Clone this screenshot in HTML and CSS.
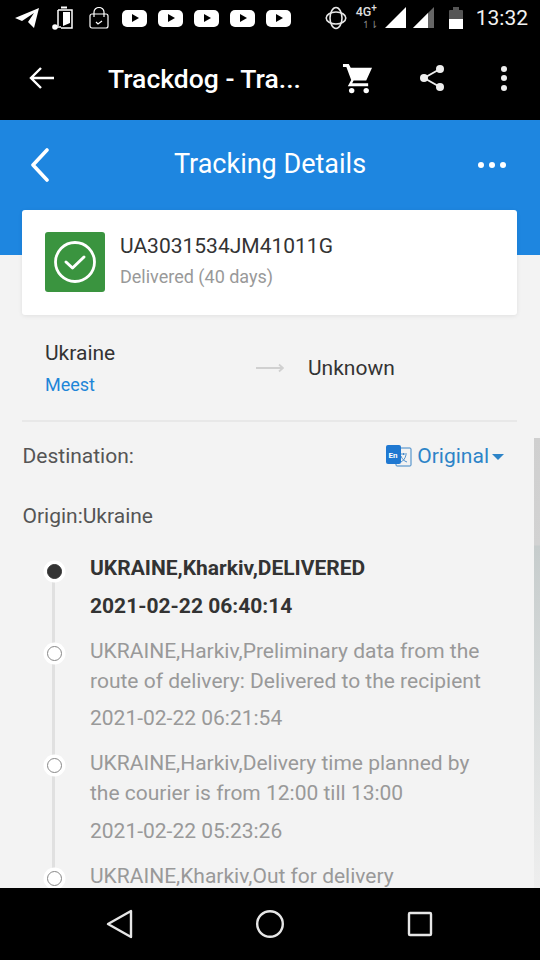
FILE: index.html
```html
<!DOCTYPE html>
<html lang="en">
<head>
    <meta charset="UTF-8">
    <meta name="viewport" content="width=device-width, initial-scale=1.0">
    <title>Tracking Details</title>
    <link rel="stylesheet" href="styles.css">
</head>
<body>
    <div class="status-bar">
        <div class="status-left">
            <svg width="24" height="22" viewBox="0 0 24 22"><path d="M0 11 24 1 19 21 13 15 19 6 7 14Z" fill="#fff"/></svg>
            <svg width="22" height="24" viewBox="0 0 22 24" fill="none" stroke="#fff" stroke-width="1.500"><path d="M6 4h14v18H9"/><path d="M9 1.500h6" stroke-width="2"/><path d="M11 6h7v11l-7 3z" fill="#fff" stroke="none"/><path d="M6 4v16"/><circle cx="3" cy="21" r="2.800" fill="#fff" stroke="none"/><path d="M3 21h6"/></svg>
            <svg width="20" height="22" viewBox="0 0 20 22" fill="none" stroke="#fff" stroke-width="1.200"><rect x="1" y="7" width="18" height="14" rx="2"/><path d="M5 10V5a5 4.500 0 0 1 10 0v5"/><path d="M7 15l2 2 4-3"/></svg>
            <span class="yt"></span><span class="yt"></span><span class="yt"></span><span class="yt"></span><span class="yt"></span>
        </div>
        <div class="status-right">
            <svg class="sync" width="22" height="24" viewBox="0 0 22 24" fill="none" stroke="#e8e8e8" stroke-width="1.600"><ellipse cx="11" cy="12" rx="6" ry="10.500"/><ellipse cx="11" cy="12" rx="9.800" ry="6"/></svg>
            <div class="net"><span>4G<sup>+</sup></span><small>↿⇂</small></div>
            <svg width="22" height="22" viewBox="0 0 22 22"><path d="M0 21 21 0V21Z" fill="#fff"/></svg>
            <svg width="22" height="22" viewBox="0 0 22 22"><path d="M0 21 21 0V21Z" fill="#666"/><path d="M0 21 15 6V21Z" fill="#fff"/></svg>
            <div class="battery"><i></i></div>
            <span class="clock">13:32</span>
        </div>
    </div>

    <div class="app-bar">
        <svg class="app-back" width="26" height="26" viewBox="0 0 26 26" fill="none" stroke="#fff" stroke-width="2.400"><path d="M25 13H2M12 3 2 13l10 10"/></svg>
        <span class="app-title">Trackdog - Tra...</span>
        <svg class="cart" width="31" height="31" viewBox="0 0 32 32" fill="#fff"><path d="M1 1h6l2 4h22l-6 13H12l-1.500 3H27v3H6l3.500-6.500L4.500 4H1z"/><circle cx="10" cy="28.500" r="2.800"/><circle cx="25" cy="28.500" r="2.800"/></svg>
        <svg class="share" width="26" height="28" viewBox="0 0 26 28" fill="#eee"><circle cx="21" cy="5" r="4"/><circle cx="5" cy="14" r="4"/><circle cx="21" cy="23" r="4"/><path d="M5 14 21 5M5 14l16 9" stroke="#eee" stroke-width="2"/></svg>
        <div class="more"><i></i><i></i><i></i></div>
    </div>

    <div class="screen">
        <div class="blue-head">
            <svg width="20" height="34" viewBox="0 0 20 34" fill="none" stroke="#fff" stroke-width="3.600" stroke-linecap="round" stroke-linejoin="round"><path d="M17 2 3 17l14 15"/></svg>
            <h1>Tracking Details</h1>
            <div class="head-dots"><i></i><i></i><i></i></div>
        </div>

        <div class="card">
            <div class="status-icon">
                <svg width="44" height="44" viewBox="0 0 44 44" fill="none" stroke="#fff" stroke-width="2.800"><circle cx="22" cy="22" r="19.500"/><path d="M13 22l6.500 6L31 17" stroke-width="3" stroke-linecap="round" stroke-linejoin="round"/></svg>
            </div>
            <div>
                <div class="track-no">UA3031534JM41011G</div>
                <div class="track-state">Delivered (40 days)</div>
            </div>
        </div>

        <div class="route">
            <div class="route-from">
                <div>Ukraine</div>
                <div class="carrier">Meest</div>
            </div>
            <svg width="28" height="10" viewBox="0 0 28 10" fill="none" stroke="#d0d0d0" stroke-width="1.800"><path d="M0 5h27M23 1.500 27 5l-4 3.500"/></svg>
            <div class="route-to">Unknown</div>
        </div>

        <div class="dest-row">
            <span>Destination:</span>
            <div class="translate">
                <svg width="26" height="22" viewBox="0 0 26 22"><rect x="10" y="3" width="15" height="18" rx="1" fill="#f2f2f2" stroke="#3d85c6" stroke-width="1"/><path d="M14 9h7M17.500 8v2M20 10c-1 4-3 6-5 7M15 11c1 3 3 5 6 6" fill="none" stroke="#3d85c6" stroke-width=".9"/><rect x="0" y="0" width="15" height="19" rx="2" fill="#1f78d1"/><text x="2.500" y="12.500" class="en">En</text></svg>
                <span>Original</span>
                <i class="caret"></i>
            </div>
        </div>

        <div class="origin">Origin:Ukraine</div>

        <div class="timeline">
            <div class="event current">
                <div class="event-text">UKRAINE,Kharkiv,DELIVERED</div>
                <div class="event-time">2021-02-22 06:40:14</div>
            </div>
            <div class="event">
                <div class="event-text">UKRAINE,Harkiv,Preliminary data from the route of delivery: Delivered to the recipient</div>
                <div class="event-time">2021-02-22 06:21:54</div>
            </div>
            <div class="event">
                <div class="event-text">UKRAINE,Harkiv,Delivery time planned by the courier is from 12:00 till 13:00</div>
                <div class="event-time">2021-02-22 05:23:26</div>
            </div>
            <div class="event">
                <div class="event-text">UKRAINE,Kharkiv,Out for delivery</div>
            </div>
        </div>
        <div class="scroll-track"></div>
    </div>

    <div class="nav-bar">
        <svg width="28" height="30" viewBox="0 0 28 30" fill="none" stroke="#e6e6e6" stroke-width="2.400" stroke-linejoin="round"><path d="M25 2v26L2 15Z"/></svg>
        <svg class="nav-home" width="30" height="30" viewBox="0 0 30 30" fill="none" stroke="#e6e6e6" stroke-width="2.400"><circle cx="15" cy="15" r="12.800"/></svg>
        <svg width="26" height="26" viewBox="0 0 26 26" fill="none" stroke="#e6e6e6" stroke-width="2.400" stroke-linejoin="round"><rect x="2" y="2" width="22" height="22" rx="1"/></svg>
    </div>
</body>
</html>
```

FILE: styles.css
```css
* {
    box-sizing: border-box;
}
body {
    font-family: Roboto, Arial, sans-serif;
    margin: 0;
    width: 540px;
    height: 960px;
    overflow: hidden;
    display: flex;
    flex-direction: column;
    background: #000;
    color: #fff;
}
.status-bar {
    height: 36px;
    flex-shrink: 0;
    display: flex;
    justify-content: space-between;
    align-items: center;
    padding: 0 12px 0 15px;
}
.status-left {
    display: flex;
    align-items: center;
    gap: 11px;
}
.status-left svg:nth-child(2) {
    margin-left: 2px;
}
.status-left svg:nth-child(3) {
    margin-left: 4px;
}
.status-left .yt:nth-child(4) {
    margin-left: 2px;
}
.yt {
    position: relative;
    width: 25px;
    height: 17px;
    border-radius: 5px;
    background: #fff;
}
.yt::after {
    content: '';
    position: absolute;
    left: 10px;
    top: 4.500px;
    border-left: 7px solid #000;
    border-top: 4px solid transparent;
    border-bottom: 4px solid transparent;
}
.status-right {
    display: flex;
    align-items: center;
    gap: 6px;
}
.sync {
    margin-right: 3px;
}
.net {
    width: 22px;
    margin-right: 1px;
    font-size: 12.500px;
    line-height: 13px;
    color: #ddd;
    font-weight: 500;
}
.net sup {
    font-size: 10px;
    line-height: 0;
}
.net small {
    display: block;
    text-align: right;
    font-size: 10px;
    color: #888;
}
.battery {
    position: relative;
    width: 14px;
    height: 19px;
    margin: 3px 7px 0 8px;
    background: #555;
    border-radius: 1px;
}
.battery::before {
    content: '';
    position: absolute;
    left: 4px;
    top: -3px;
    width: 6px;
    height: 3px;
    background: #555;
}
.battery i {
    position: absolute;
    left: 0;
    right: 0;
    bottom: 0;
    height: 10px;
    background: #fff;
}
.clock {
    font-size: 21px;
    color: #f2f2f2;
}
.app-bar {
    height: 84px;
    flex-shrink: 0;
    display: flex;
    align-items: center;
}
.app-back {
    margin-left: 29px;
}
.app-title {
    margin-left: 53px;
    font-size: 26.500px;
    font-weight: 500;
    width: 234px;
    white-space: nowrap;
}
.share {
    margin-left: 46px;
}
.more {
    margin-left: 56px;
    display: flex;
    flex-direction: column;
    gap: 3.500px;
}
.more i {
    width: 6px;
    height: 6px;
    border-radius: 50%;
    background: #eee;
}
.screen {
    flex: 1;
    position: relative;
    overflow: hidden;
    background: #f3f3f3;
    color: #333;
}
.blue-head {
    height: 135px;
    background: #1e86e0;
    color: #fff;
    display: flex;
    align-items: flex-start;
    justify-content: space-between;
    padding: 28px 34px 0 30px;
}
.blue-head h1 {
    margin: 0 0 0 12px;
    font-size: 27px;
    line-height: 32px;
    font-weight: 400;
}
.head-dots {
    display: flex;
    gap: 5px;
    margin-top: 14px;
}
.head-dots i {
    width: 6px;
    height: 6px;
    border-radius: 50%;
    background: #fff;
}
.card {
    display: flex;
    gap: 15px;
    height: 105px;
    margin: -45px 23px 0 22px;
    padding: 22px 23px 0;
    position: relative;
    background: #fff;
    border-radius: 3px;
    box-shadow: 0 1px 4px rgba(0, 0, 0, 0.08);
}
.status-icon {
    width: 60px;
    height: 60px;
    border-radius: 3px;
    background: #3a943f;
    display: flex;
    align-items: center;
    justify-content: center;
}
.track-no {
    font-size: 21px;
    line-height: 28px;
    color: #333;
}
.track-state {
    margin-top: 5px;
    font-size: 18px;
    line-height: 24px;
    color: #999;
}
.route {
    display: flex;
    align-items: center;
    height: 107px;
    margin: 0 23px 0 22px;
    padding-left: 23px;
    border-bottom: 2px solid #e8e8e8;
    font-size: 21px;
}
.route-from {
    width: 211px;
}
.carrier {
    margin-top: 9px;
    font-size: 18px;
    color: #1e86d8;
}
.route-to {
    margin-left: 24px;
}
.dest-row {
    display: flex;
    justify-content: space-between;
    align-items: center;
    height: 32px;
    margin: 18px 36px 0 22.500px;
    font-size: 21px;
    color: #555;
}
.translate {
    display: flex;
    align-items: center;
    gap: 6px;
    color: #2d84c8;
}
.translate svg {
    margin-right: -1px;
}
.en {
    font-size: 8px;
    font-weight: 700;
    fill: #fff;
}
.caret {
    margin: 2px 0 0 -3px;
    border-top: 6px solid #2d84c8;
    border-left: 6px solid transparent;
    border-right: 6px solid transparent;
}
.origin {
    margin: 32px 0 0 22.500px;
    font-size: 21px;
    color: #555;
}
.timeline {
    position: relative;
    margin: 25px 50px 0 90px;
}
.event {
    position: relative;
    padding-bottom: 15px;
}
.event::before {
    content: '';
    position: absolute;
    left: -38px;
    top: 14px;
    bottom: -14px;
    width: 3px;
    background: #e0e0e0;
}
.event::after {
    content: '';
    position: absolute;
    left: -43px;
    top: 10px;
    width: 13px;
    height: 13px;
    border-radius: 50%;
    border: 1.500px solid #888;
    background: #fff;
    box-shadow: 0 0 0 3.500px #fff;
}
.event.current::after {
    top: 11px;
    background: #333;
    border-color: #333;
}
.event:last-child::before {
    display: none;
}
.event-text {
    font-size: 21px;
    line-height: 30px;
    color: #999;
}
.event-time {
    margin-top: 7.500px;
    font-size: 21px;
    line-height: 30px;
    color: #999;
}
.current .event-text,
.current .event-time {
    font-weight: 700;
    color: #333;
}
.scroll-track {
    position: absolute;
    right: 0;
    top: 318px;
    bottom: 0;
    width: 6px;
    background: linear-gradient(#cfcfcf 0, #d2d2d2 107px, #c6cccc 108px, #eeeeee 100%);
}
.nav-bar {
    height: 72px;
    flex-shrink: 0;
    display: flex;
    align-items: center;
    justify-content: space-between;
    padding: 0 107px 0 106px;
}
.nav-home {
    margin-left: -2px;
}
```
